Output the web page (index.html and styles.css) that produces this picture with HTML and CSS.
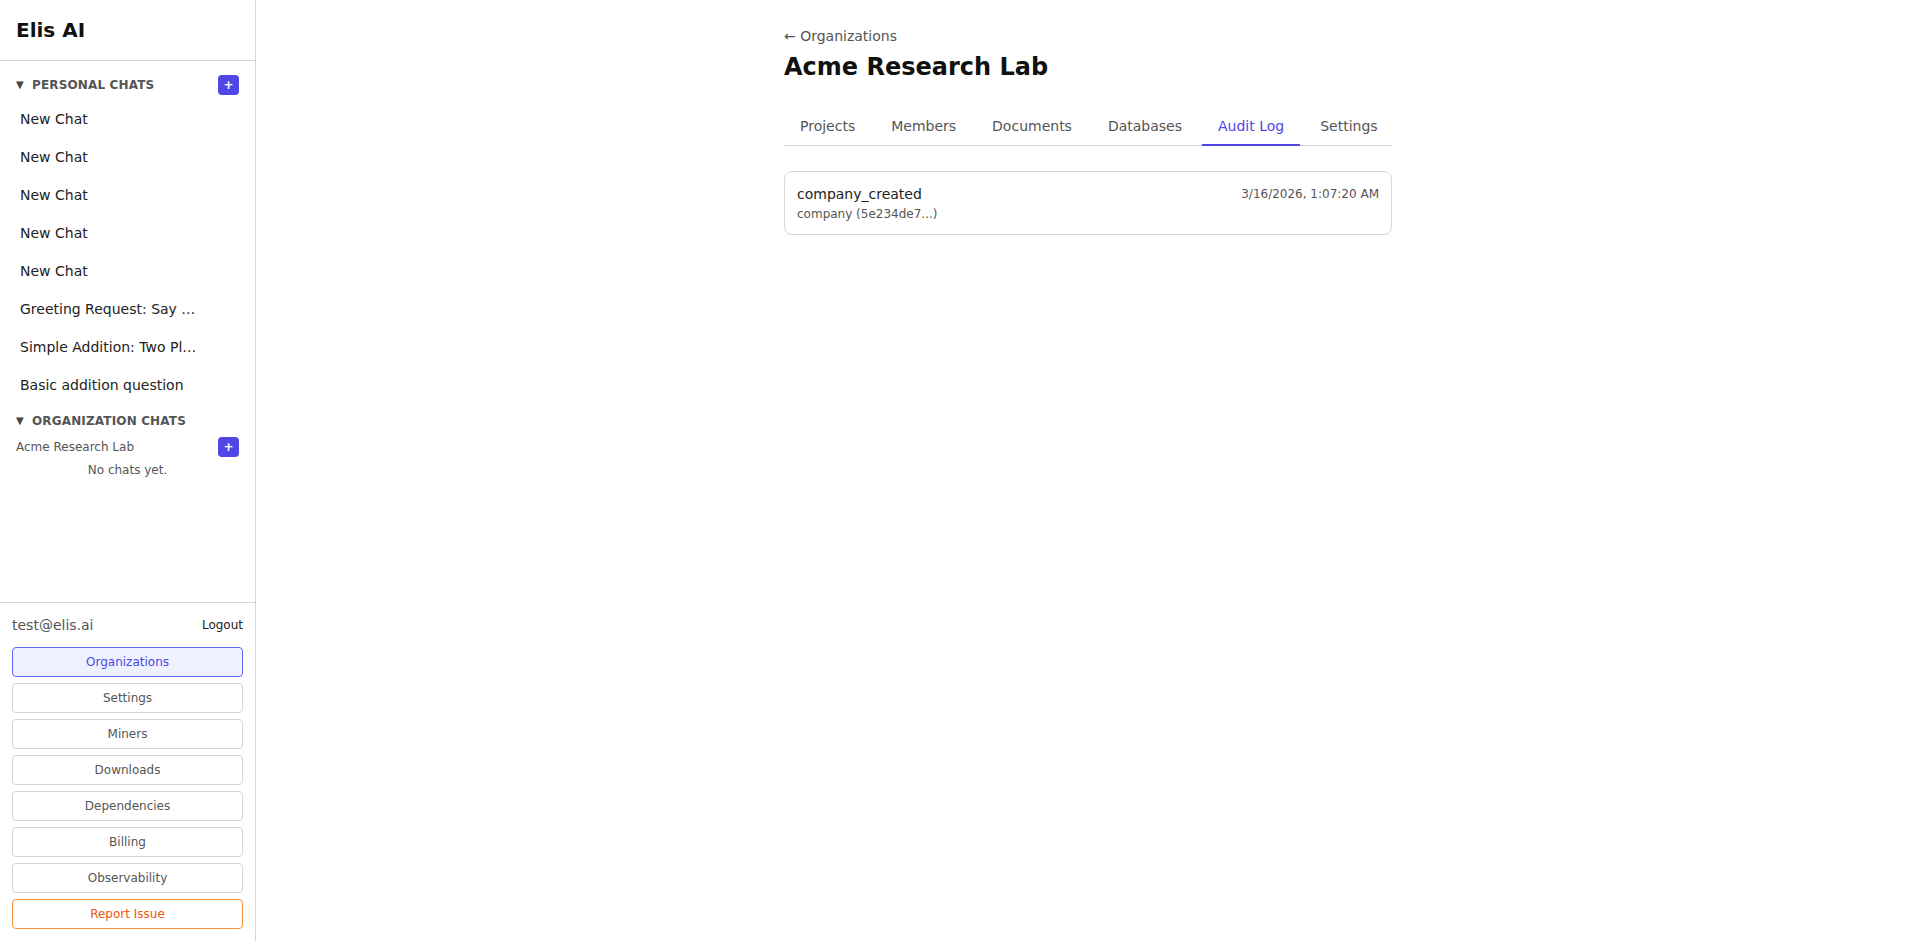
FILE: index.html
```html
<!DOCTYPE html>
<html lang="en">
<head>
<meta charset="utf-8">
<title>Elis AI</title>
<link rel="stylesheet" href="styles.css">
</head>
<body>
<div class="app">
  <aside class="sidebar">
    <div class="brand">Elis AI</div>
    <div class="chats">
      <div class="section-head">
        <span class="caret">▼</span><span class="section-title">PERSONAL CHATS</span>
        <button class="add">+</button>
      </div>
      <ul class="chat-list">
        <li class="chat"><span class="chat-title">New Chat</span></li>
        <li class="chat"><span class="chat-title">New Chat</span></li>
        <li class="chat"><span class="chat-title">New Chat</span></li>
        <li class="chat"><span class="chat-title">New Chat</span></li>
        <li class="chat"><span class="chat-title">New Chat</span></li>
        <li class="chat"><span class="chat-title">Greeting Request: Say Hello</span></li>
        <li class="chat"><span class="chat-title">Simple Addition: Two Plus Two</span></li>
        <li class="chat"><span class="chat-title">Basic addition question</span></li>
      </ul>
      <div class="section-head org-head">
        <span class="caret">▼</span><span class="section-title">ORGANIZATION CHATS</span>
      </div>
      <div class="org-row">
        <span class="org-name">Acme Research Lab</span>
        <button class="add">+</button>
      </div>
      <div class="empty">No chats yet.</div>
    </div>
    <div class="account">
      <div class="user-row">
        <span class="email">test@elis.ai</span>
        <button class="logout">Logout</button>
      </div>
      <nav class="nav">
        <button class="nav-btn active">Organizations</button>
        <button class="nav-btn">Settings</button>
        <button class="nav-btn">Miners</button>
        <button class="nav-btn">Downloads</button>
        <button class="nav-btn">Dependencies</button>
        <button class="nav-btn">Billing</button>
        <button class="nav-btn">Observability</button>
        <button class="nav-btn report">Report Issue</button>
      </nav>
    </div>
  </aside>
  <main class="main">
    <div class="content">
      <a class="back">← Organizations</a>
      <h1 class="title">Acme Research Lab</h1>
      <div class="tabs">
        <span class="tab">Projects</span>
        <span class="tab">Members</span>
        <span class="tab">Documents</span>
        <span class="tab">Databases</span>
        <span class="tab active">Audit Log</span>
        <span class="tab">Settings</span>
      </div>
      <div class="log-card">
        <div class="log-main">
          <div class="log-action">company_created</div>
          <div class="log-target">company (5e234de7...)</div>
        </div>
        <div class="log-time">3/16/2026, 1:07:20 AM</div>
      </div>
    </div>
  </main>
</div>
</body>
</html>
```
FILE: styles.css
```css
* { box-sizing: border-box; }
html, body {
  margin: 0;
  padding: 0;
  height: 100%;
  background: #fff;
  font-family: "DejaVu Sans", sans-serif;
  color: #222;
}
button { font-family: inherit; cursor: pointer; }

.app {
  display: flex;
  height: 100vh;
}

/* Sidebar */
.sidebar {
  width: 256px;
  flex: 0 0 256px;
  border-right: 1px solid #d6d6d6;
  display: flex;
  flex-direction: column;
  background: #fff;
}
.brand {
  height: 61px;
  padding: 16px;
  font-size: 20px;
  line-height: 28px;
  font-weight: bold;
  color: #111;
  border-bottom: 1px solid #d6d6d6;
}
.chats {
  flex: 1;
  padding: 14px 16px 0 16px;
  overflow: hidden;
}
.section-head {
  display: flex;
  align-items: center;
  height: 20px;
  margin-bottom: 6px;
}
.caret {
  font-size: 10px;
  color: #444;
  width: 16px;
  line-height: 20px;
}
.section-title {
  flex: 1;
  font-size: 12px;
  font-weight: bold;
  letter-spacing: 0.15px;
  color: #555;
  line-height: 20px;
}
.add {
  width: 21px;
  height: 20px;
  padding: 0;
  border: none;
  border-radius: 4px;
  background: #4f46e5;
  color: #fff;
  font-size: 12px;
  font-weight: bold;
  line-height: 20px;
  text-align: center;
}
.chat-list {
  list-style: none;
  margin: 0;
  padding: 0;
}
.chat {
  display: flex;
  height: 36px;
  margin-bottom: 2px;
  padding: 8px 42px 8px 4px;
  border-radius: 4px;
  font-size: 14px;
  line-height: 20px;
  color: #222;
}
.chat-title {
  flex: 1;
  min-width: 0;
  white-space: nowrap;
  overflow: hidden;
  text-overflow: ellipsis;
}
.org-head {
  margin-top: 8px;
  margin-bottom: 6px;
}
.org-row {
  display: flex;
  align-items: center;
  justify-content: space-between;
  height: 20px;
}
.org-name {
  font-size: 12px;
  color: #555;
}
.empty {
  margin-top: 5px;
  text-align: center;
  font-size: 12px;
  line-height: 16px;
  color: #555;
}

.account {
  border-top: 1px solid #d6d6d6;
  padding: 12px;
}
.user-row {
  display: flex;
  align-items: center;
  justify-content: space-between;
  height: 20px;
  margin-bottom: 12px;
}
.email {
  font-size: 14px;
  color: #555;
}
.logout {
  border: none;
  background: none;
  padding: 0;
  font-size: 12px;
  color: #222;
}
.nav {
  display: flex;
  flex-direction: column;
  gap: 6px;
}
.nav-btn {
  height: 30px;
  padding: 0;
  border: 1px solid #d4d4d4;
  border-radius: 4px;
  background: #fff;
  font-size: 12px;
  color: #555;
  text-align: center;
}
.nav-btn.active {
  background: #eef2ff;
  border-color: #6366f1;
  color: #4f46e5;
}
.nav-btn.report {
  border-color: #fb923c;
  color: #ea580c;
}

/* Main */
.main {
  flex: 1;
  min-width: 0;
  overflow: auto;
}
.content {
  max-width: 640px;
  margin: 0 auto;
  padding: 26px 16px 24px;
}
.back {
  display: block;
  font-size: 14px;
  line-height: 20px;
  color: #555;
  text-decoration: none;
  margin-bottom: 5px;
}
.title {
  margin: 0 0 25px;
  font-size: 24px;
  line-height: 32px;
  font-weight: bold;
  color: #111;
}
.tabs {
  display: flex;
  gap: 4px;
  border-bottom: 1px solid #d6d6d6;
  margin-bottom: 25px;
}
.tab {
  flex: 0 0 auto;
  white-space: nowrap;
  padding: 8px 16px;
  font-size: 14px;
  line-height: 20px;
  color: #555;
  border-bottom: 2px solid transparent;
  margin-bottom: -1px;
}
.tab.active {
  color: #4f46e5;
  border-bottom-color: #4f46e5;
}
.log-card {
  display: flex;
  justify-content: space-between;
  align-items: flex-start;
  border: 1px solid #d6d6d6;
  border-radius: 8px;
  padding: 12px;
}
.log-action {
  font-size: 14px;
  line-height: 20px;
  color: #222;
}
.log-target {
  margin-top: 2px;
  font-size: 12px;
  line-height: 16px;
  color: #555;
}
.log-time {
  font-size: 12px;
  line-height: 20px;
  color: #555;
}
```
